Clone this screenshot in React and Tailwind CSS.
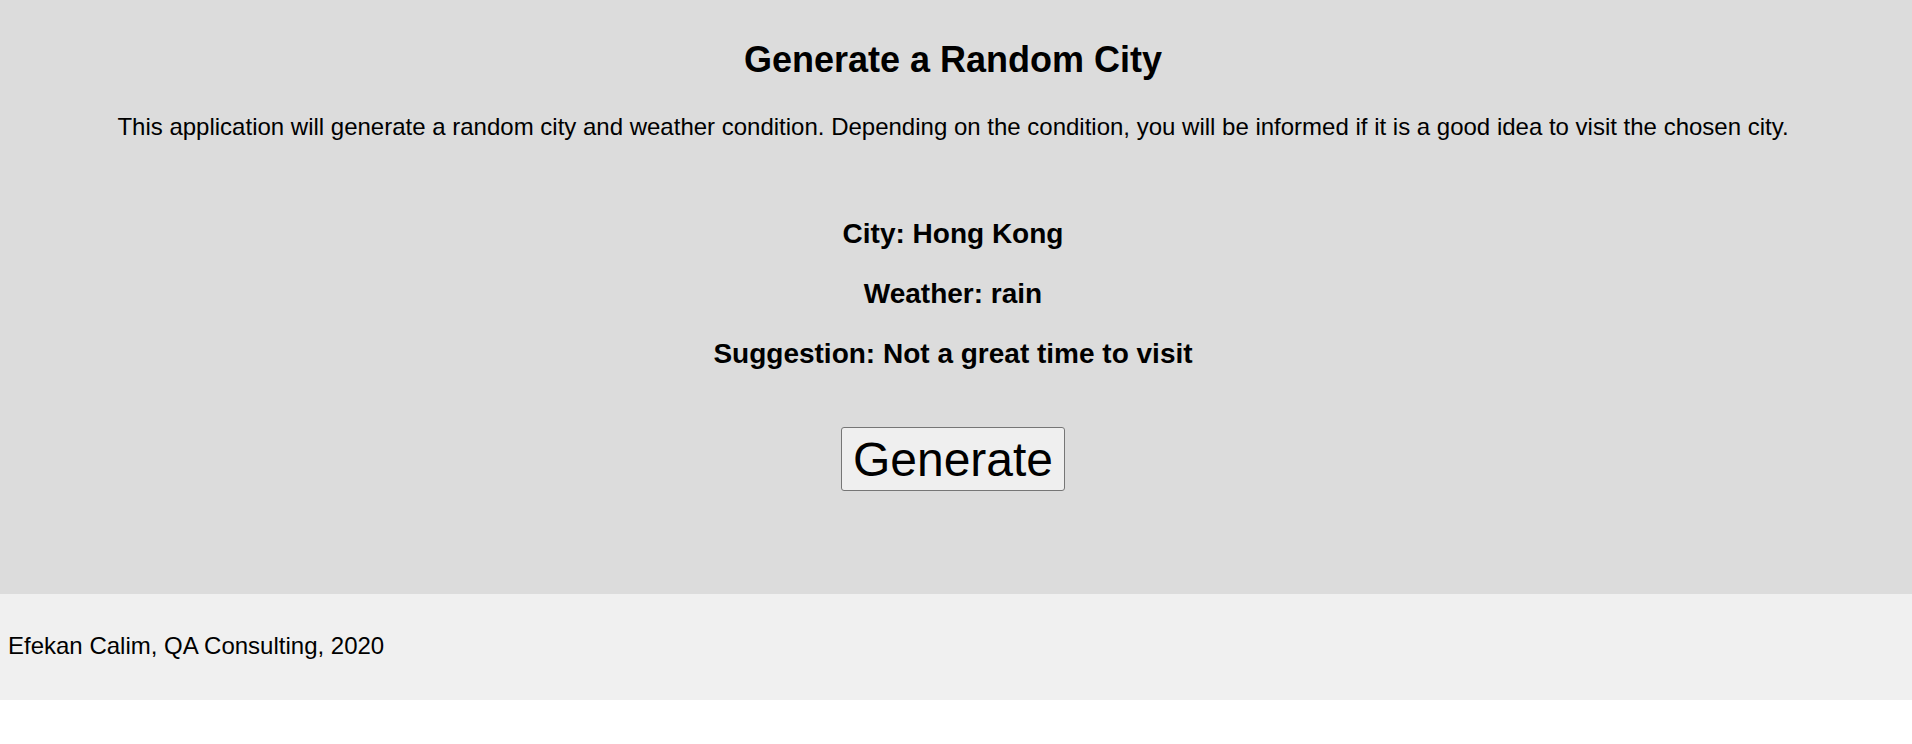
export default function App() {
  return (
    <div className="w-full font-['Liberation_Sans',Arial,sans-serif] text-black">
      <div className="h-[594px] bg-[#dcdcdc] flex flex-col items-center pr-[6px]">
        <h2 className="mt-[39px] text-[36px] leading-[41px] font-bold">Generate a Random City</h2>
        <p className="mt-[33px] text-[24px] leading-[28px]">
          This application will generate a random city and weather condition. Depending on the condition, you will be informed if it is a good idea to visit the chosen city.
        </p>
        <h3 className="mt-[77px] text-[28px] leading-[32px] font-bold">City: Hong Kong</h3>
        <h3 className="mt-[28px] text-[28px] leading-[32px] font-bold">Weather: rain</h3>
        <h3 className="mt-[28px] text-[28px] leading-[32px] font-bold">Suggestion: Not a great time to visit</h3>
        <button className="mt-[57px] w-[224px] h-[64px] flex items-center justify-center border border-[#767676] bg-[#efefef] rounded-[3px] text-[48px] leading-[55px]">
          Generate
        </button>
      </div>
      <div className="h-[106px] bg-[#f0f0f0] pl-2 pt-[38px]">
        <p className="text-[24px] leading-[28px]">Efekan Calim, QA Consulting, 2020</p>
      </div>
    </div>
  );
}
